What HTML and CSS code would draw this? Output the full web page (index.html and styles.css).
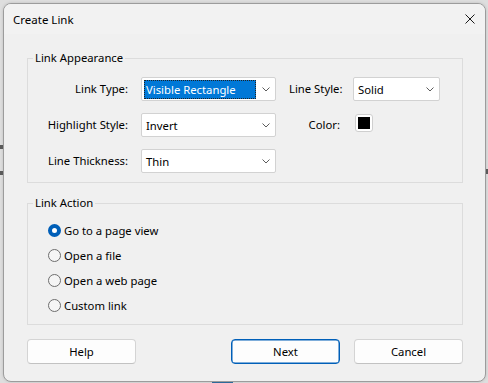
FILE: index.html
```html
<!DOCTYPE html>
<html lang="en">
<head>
  <meta charset="UTF-8">
  <title>Create Link</title>
  <link rel="stylesheet" href="styles.css">
</head>
<body>
  <!-- bits of the windows behind the dialog -->
  <div class="mark mark-l1"></div>
  <div class="mark mark-l2"></div>
  <div class="mark mark-r1"></div>
  <div class="mark mark-b1"></div>

  <div class="dialog">
    <div class="titlebar">
      <span class="title">Create Link</span>
      <svg class="close" width="10" height="10" viewBox="0 0 10 10">
        <path d="M0.5 0.5 L9.5 9.5 M9.5 0.5 L0.5 9.5" stroke="#1a1a1a" stroke-width="1" fill="none"/>
      </svg>
    </div>

    <div class="content">
      <!-- Link Appearance -->
      <fieldset class="group">
        <legend>Link Appearance</legend>
        <div class="appearance">
          <label class="lbl">Link Type:</label>
          <div class="combo focused">
            <span class="sel">Visible Rectangle</span>
            <svg class="chev" width="8" height="5" viewBox="0 0 8 5"><path d="M0.5 0.5 L4 4 L7.5 0.5" stroke="#5c5c5c" fill="none"/></svg>
          </div>
          <label class="lbl">Line Style:</label>
          <div class="combo">
            <span>Solid</span>
            <svg class="chev" width="8" height="5" viewBox="0 0 8 5"><path d="M0.5 0.5 L4 4 L7.5 0.5" stroke="#5c5c5c" fill="none"/></svg>
          </div>

          <label class="lbl">Highlight Style:</label>
          <div class="combo">
            <span>Invert</span>
            <svg class="chev" width="8" height="5" viewBox="0 0 8 5"><path d="M0.5 0.5 L4 4 L7.5 0.5" stroke="#5c5c5c" fill="none"/></svg>
          </div>
          <label class="lbl">Color:</label>
          <div class="swatch"><span></span></div>

          <label class="lbl">Line Thickness:</label>
          <div class="combo">
            <span>Thin</span>
            <svg class="chev" width="8" height="5" viewBox="0 0 8 5"><path d="M0.5 0.5 L4 4 L7.5 0.5" stroke="#5c5c5c" fill="none"/></svg>
          </div>
        </div>
      </fieldset>

      <!-- Link Action -->
      <fieldset class="group action">
        <legend>Link Action</legend>
        <div class="radios">
          <div class="radio on"><span class="dot"></span>Go to a page view</div>
          <div class="radio"><span class="dot"></span>Open a file</div>
          <div class="radio"><span class="dot"></span>Open a web page</div>
          <div class="radio"><span class="dot"></span>Custom link</div>
        </div>
      </fieldset>

      <div class="buttons">
        <button class="btn">Help</button>
        <button class="btn default">Next</button>
        <button class="btn">Cancel</button>
      </div>
    </div>
  </div>
</body>
</html>
```

FILE: styles.css
```css
html, body { margin: 0; }
body { width: 488px; height: 383px; box-sizing: border-box; padding: 3px 2px 1px 3px; background: #dedede; font-family: "Noto Sans", "Open Sans", sans-serif; font-size: 11.3px; color: #000; position: relative; overflow: hidden; }

.mark { position: absolute; background: #5a5a5a; }
.mark-l1 { left: 0; top: 145px; width: 3px; height: 4px; }
.mark-l2 { left: 0; top: 171px; width: 3px; height: 4px; }
.mark-r1 { left: 486px; top: 169px; width: 2px; height: 5px; }
.mark-b1 { left: 212px; top: 382px; width: 21px; height: 1px; background: #2c6a9a; }

.dialog { width: 483px; height: 379px; box-sizing: border-box; border: 1px solid #9c9c9c; border-radius: 8px; background: #f0f0f0; overflow: hidden; box-shadow: 0 0 3px rgba(0,0,0,0.15); }

.titlebar { height: 30px; display: flex; align-items: center; padding: 0 10px 0 9px; background: #f2f2f2; font-size: 11.5px; }
.title { flex: 1; }
.close { display: block; }

.content { padding: 16px 22px 0 23px; }

.group { margin: 0; padding: 0; border: 1px solid #dcdcdc; min-width: 0; }
.group legend { margin-left: 5px; padding: 0 2px; line-height: 16px; }
.group.action { margin-top: 12px; }

.appearance { display: grid; grid-template-columns: 100px 135px 51px 87px; grid-auto-rows: 24px; column-gap: 13px; row-gap: 12px; padding: 11px 0 9px 0; }
.lbl { text-align: right; align-self: center; white-space: nowrap; margin-top: -1px; }

.combo { display: flex; align-items: center; box-sizing: border-box; border: 1px solid #d2d2d2; border-radius: 2px; background: #fff; padding-left: 4px; }
.combo .chev { margin-left: auto; margin-right: 5px; }
.combo.focused { padding-left: 2px; }
.combo .sel { box-sizing: border-box; width: 112px; height: 19px; line-height: 19px; padding-left: 2px; background: #0078d7; color: #fff; outline: 1px dotted #222; outline-offset: -1px; }

.swatch { align-self: start; margin: 1px 0 0 2px; width: 18px; height: 18px; box-sizing: border-box; border: 1px solid #cfcfcf; border-radius: 3px; background: #fff; padding: 2px; }
.swatch span { display: block; width: 12px; height: 12px; background: #000; }

.radios { padding: 7px 0 6px 20px; }
.radio { display: flex; align-items: center; height: 25px; }
.dot { width: 13px; height: 13px; box-sizing: border-box; border: 1px solid #6e6e6e; border-radius: 50%; background: #f5f5f5; margin-right: 3px; }
.radio.on .dot { border: 4px solid #005fb8; background: #fff; }

.buttons { display: flex; gap: 14px; margin-top: 14px; }
.btn { width: 109px; height: 25px; box-sizing: border-box; font: inherit; color: #000; background: #fdfdfd; border: 1px solid #d4d4d4; border-bottom-color: #c2c2c2; border-radius: 4px; padding: 0; }
.btn.default { margin-left: auto; border-color: #005fb8; box-shadow: inset 0 0 0 0.5px #005fb8; }
```
